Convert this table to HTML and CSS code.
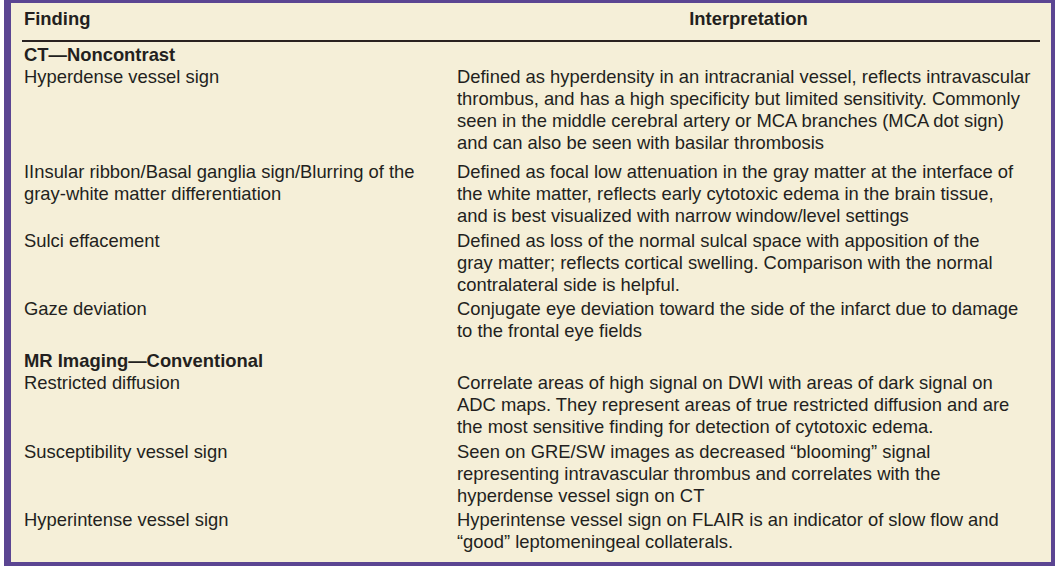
FILE: index.html
```html
<!DOCTYPE html>
<html>
<head>
<meta charset="utf-8">
<link rel="stylesheet" href="styles.css">
</head>
<body>
<div class="frame">
  <div class="table">
    <div class="head">
      <div class="fcol">Finding</div>
      <div class="icol center">Interpretation</div>
    </div>
    <div class="section">CT—Noncontrast</div>
    <div class="row r1">
      <div class="fcol">Hyperdense vessel sign</div>
      <div class="icol">Defined as hyperdensity in an intracranial vessel, reflects intravascular<br>thrombus, and has a high specificity but limited sensitivity. Commonly<br>seen in the middle cerebral artery or MCA branches (MCA dot sign)<br>and can also be seen with basilar thrombosis</div>
    </div>
    <div class="row r2">
      <div class="fcol">IInsular ribbon/Basal ganglia sign/Blurring of the<br>gray-white matter differentiation</div>
      <div class="icol">Defined as focal low attenuation in the gray matter at the interface of<br>the white matter, reflects early cytotoxic edema in the brain tissue,<br>and is best visualized with narrow window/level settings</div>
    </div>
    <div class="row r3">
      <div class="fcol">Sulci effacement</div>
      <div class="icol">Defined as loss of the normal sulcal space with apposition of the<br>gray matter; reflects cortical swelling. Comparison with the normal<br>contralateral side is helpful.</div>
    </div>
    <div class="row r4">
      <div class="fcol">Gaze deviation</div>
      <div class="icol">Conjugate eye deviation toward the side of the infarct due to damage<br>to the frontal eye fields</div>
    </div>
    <div class="section s2">MR Imaging—Conventional</div>
    <div class="row r5">
      <div class="fcol">Restricted diffusion</div>
      <div class="icol">Correlate areas of high signal on DWI with areas of dark signal on<br>ADC maps. They represent areas of true restricted diffusion and are<br>the most sensitive finding for detection of cytotoxic edema.</div>
    </div>
    <div class="row r6">
      <div class="fcol">Susceptibility vessel sign</div>
      <div class="icol">Seen on GRE/SW images as decreased “blooming” signal<br>representing intravascular thrombus and correlates with the<br>hyperdense vessel sign on CT</div>
    </div>
    <div class="row r7">
      <div class="fcol">Hyperintense vessel sign</div>
      <div class="icol">Hyperintense vessel sign on FLAIR is an indicator of slow flow and<br>“good” leptomeningeal collaterals.</div>
    </div>
  </div>
</div>
</body>
</html>
```
FILE: styles.css
```css
html, body {
  margin: 0;
  padding: 0;
  background: #ffffff;
}
.frame {
  box-sizing: border-box;
  margin-left: 4px;
  width: 1051px;
  height: 566px;
  background: #f5efd8;
  border-style: solid;
  border-color: #5b4592;
  border-width: 3px 4px 4px 7px;
  padding: 5px 0 0 11px;
  font-family: "Liberation Sans", Arial, sans-serif;
  font-size: 18.4px;
  line-height: 22px;
  color: #231f20;
}
.table {
  width: 1018px;
}
.head {
  display: flex;
  font-weight: bold;
  padding-bottom: 10px;
  border-bottom: 2px solid #2a2220;
}
.fcol {
  width: 433px;
  padding-left: 2px;
  flex: none;
}
.icol {
  flex: 1;
}
.center {
  text-align: center;
}
.section {
  font-weight: bold;
  padding: 2px 0 0 2px;
}
.s2 {
  padding-top: 5px;
}
.row {
  display: flex;
  padding-bottom: 3px;
}
.r1 {
  padding-bottom: 7px;
}
.r3, .r6 {
  padding-bottom: 2px;
}
```
